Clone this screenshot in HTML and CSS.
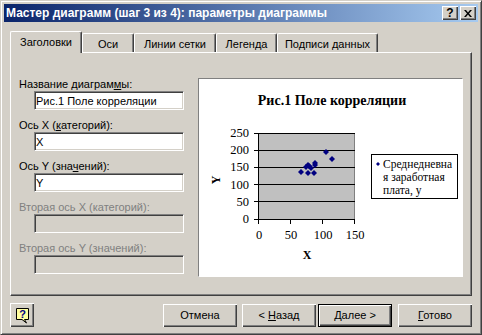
FILE: index.html
```html
<!DOCTYPE html>
<html lang="ru">
<head>
    <meta charset="UTF-8">
    <title>Мастер диаграмм</title>
    <link rel="stylesheet" href="styles.css">
</head>
<body>
    <div class="window">
        <div class="titlebar">
            <span class="title">Мастер диаграмм (шаг 3 из 4): параметры диаграммы</span>
            <div class="caption-buttons">
                <button class="caption-btn caption-help">?</button>
                <button class="caption-btn caption-close">
                    <svg width="8" height="7" viewBox="0 0 8 7">
                        <path d="M0 0h2l2 2.5 2-2.5h2l-3 3.5 3 3.5h-2l-2-2.5-2 2.5h-2l3-3.5z" fill="#000"/>
                    </svg>
                </button>
            </div>
        </div>

        <div class="dialog">
            <div class="tabs">
                <div class="tab tab-titles active">Заголовки</div>
                <div class="tab tab-axes">Оси</div>
                <div class="tab tab-grid">Линии сетки</div>
                <div class="tab tab-legend">Легенда</div>
                <div class="tab tab-labels">Подписи данных</div>
            </div>

            <div class="panel">
                <div class="fields">
                    <div class="field">
                        <label class="field-label">Название диаграм<u>м</u>ы:</label>
                        <input class="field-input" type="text" value="Рис.1 Поле корреляции">
                    </div>
                    <div class="field">
                        <label class="field-label">Ось X (<u>к</u>атегорий):</label>
                        <input class="field-input" type="text" value="X">
                    </div>
                    <div class="field">
                        <label class="field-label">Ось Y (зна<u>ч</u>ений):</label>
                        <input class="field-input" type="text" value="Y">
                    </div>
                    <div class="field disabled">
                        <label class="field-label">Вторая ось X (категорий):</label>
                        <input class="field-input" type="text" disabled>
                    </div>
                    <div class="field disabled">
                        <label class="field-label">Вторая ось Y (значений):</label>
                        <input class="field-input" type="text" disabled>
                    </div>
                </div>

                <div class="chart">
                    <svg class="chart-svg" width="263" height="197" viewBox="0 0 263 197">
                        <defs>
                            <path id="pt" d="M0 -3L3 0L0 3L-3 0Z" fill="#000080"/>
                        </defs>
                        <text class="chart-title" x="133" y="26">Рис.1 Поле корреляции</text>

                        <rect x="59.5" y="54.5" width="96" height="86" fill="#c0c0c0" stroke="#808080"/>
                        <g stroke="#000">
                            <path d="M59 54.5h97M59 71.5h97M59 88.5h97M59 105.5h97M59 122.5h97M59 140.5h97"/>
                            <path d="M59.5 54v87"/>
                            <path d="M55 54.5h4M55 71.5h4M55 88.5h4M55 105.5h4M55 122.5h4M55 140.5h4"/>
                            <path d="M59.5 141v4M91.5 141v4M123.5 141v4M155.5 141v4"/>
                        </g>

                        <g class="tick-y">
                            <text x="50" y="58">250</text>
                            <text x="50" y="75">200</text>
                            <text x="50" y="92">150</text>
                            <text x="50" y="110">100</text>
                            <text x="50" y="127">50</text>
                            <text x="50" y="144">0</text>
                        </g>
                        <g class="tick-x">
                            <text x="60" y="160">0</text>
                            <text x="92" y="160">50</text>
                            <text x="124" y="160">100</text>
                            <text x="156" y="160">150</text>
                        </g>

                        <text class="axis-title" x="108" y="180">X</text>
                        <text class="axis-title" transform="translate(21 101) rotate(-90)">Y</text>

                        <use href="#pt" x="102" y="93"/>
                        <use href="#pt" x="107" y="88"/>
                        <use href="#pt" x="109" y="86"/>
                        <use href="#pt" x="110" y="87"/>
                        <use href="#pt" x="112" y="89"/>
                        <use href="#pt" x="109" y="94"/>
                        <use href="#pt" x="115" y="94"/>
                        <use href="#pt" x="116" y="86"/>
                        <use href="#pt" x="116" y="84"/>
                        <use href="#pt" x="127" y="73"/>
                        <use href="#pt" x="133" y="80"/>

                        <rect x="172.5" y="75.5" width="86" height="44" fill="#fff" stroke="#000"/>
                        <path d="M179 83L181 85L179 87L177 85Z" fill="#000080"/>
                        <g class="legend-text">
                            <text x="184" y="89">Среднедневна</text>
                            <text x="184" y="102">я заработная</text>
                            <text x="184" y="115">плата, y</text>
                        </g>
                    </svg>
                </div>
            </div>

            <div class="footer">
                <button class="help-btn">
                    <svg width="14" height="16" viewBox="0 0 14 16">
                        <path d="M0.5 0.5h12v11h-4l2 3.5-4.5-3.5h-5.5z" fill="#ffffa0" stroke="#000"/>
                        <text x="6.5" y="9.5" class="help-mark">?</text>
                    </svg>
                </button>
                <button class="btn btn-cancel">Отмена</button>
                <button class="btn btn-back">&lt; <u>Н</u>азад</button>
                <button class="btn btn-next default"><u>Д</u>алее &gt;</button>
                <button class="btn btn-finish"><u>Г</u>отово</button>
            </div>
        </div>
    </div>
</body>
</html>
```

FILE: styles.css
```css
body {
    margin: 0;
    font-family: "Liberation Sans", Arial, sans-serif;
    font-size: 11px;
    color: #000;
    background-color: #d4d0c8;
}

.window {
    width: 482px;
    height: 335px;
    box-sizing: border-box;
    padding: 3px;
    background-color: #d4d0c8;
    border: 1px solid;
    border-color: #d4d0c8 #404040 #404040 #d4d0c8;
    box-shadow: inset 1px 1px #fff, inset -1px -1px #808080;
}

.titlebar {
    height: 18px;
    display: flex;
    align-items: center;
    padding-left: 2px;
    background: linear-gradient(to right, #0a246a, #a6caf0);
    color: #fff;
}

.title {
    font-weight: bold;
    font-size: 12px;
}

.caption-buttons {
    margin-left: auto;
    margin-right: 2px;
    display: flex;
    gap: 2px;
}

.caption-btn {
    width: 16px;
    height: 14px;
    padding: 0;
    box-sizing: border-box;
    display: flex;
    align-items: center;
    justify-content: center;
    background-color: #d4d0c8;
    border: none;
    box-shadow: inset 1px 1px #fff, inset -1px -1px #404040, inset -2px -2px #808080;
    font-family: "Liberation Sans", Arial, sans-serif;
    font-size: 12px;
    font-weight: bold;
    color: #000;
}

.caption-help {
    padding-bottom: 1px;
}

.dialog {
    padding: 9px 6px 0;
}

/* tab strip */
.tabs {
    display: flex;
    align-items: flex-end;
    height: 21px;
    position: relative;
    z-index: 1;
}

.tab {
    height: 19px;
    box-sizing: border-box;
    display: flex;
    align-items: center;
    justify-content: center;
    padding-top: 1px;
    border: 1px solid;
    border-color: #fff #404040 transparent #fff;
    border-bottom: none;
    border-radius: 2px 2px 0 0;
    box-shadow: inset -1px 0 #808080;
    background-color: #d4d0c8;
}

.tab.active {
    height: 22px;
    margin-bottom: -1px;
    padding-bottom: 2px;
}

.tab-titles { width: 72px; }
.tab-axes { width: 52px; }
.tab-grid { width: 82px; }
.tab-legend { width: 61px; }
.tab-labels { width: 101px; }

.panel {
    height: 244px;
    box-sizing: border-box;
    display: flex;
    align-items: flex-start;
    padding: 25px 8px 0;
    border: 1px solid;
    border-color: #fff #404040 #404040 #fff;
    box-shadow: inset -1px -1px #808080;
}

/* left column */
.fields {
    width: 170px;
}

.field {
    margin-bottom: 9px;
}

.field-label {
    display: block;
    height: 13px;
    line-height: 13px;
}

.field-input {
    display: block;
    margin: 0 0 0 15px;
    width: 150px;
    height: 19px;
    box-sizing: border-box;
    padding: 0 1px;
    font-family: "Liberation Sans", Arial, sans-serif;
    font-size: 11px;
    color: #000;
    background-color: #fff;
    border: 1px solid;
    border-color: #808080 #fff #fff #808080;
    box-shadow: inset 1px 1px #404040, inset -1px -1px #d4d0c8;
    outline: none;
}

.field.disabled .field-label {
    color: #808080;
}

.field.disabled .field-input {
    background-color: #d4d0c8;
}

/* chart preview */
.chart {
    margin-left: 9px;
    width: 265px;
    height: 199px;
    box-sizing: border-box;
    background-color: #fff;
    border: 1px solid;
    border-color: #808080 #fff #fff #808080;
}

.chart-svg {
    display: block;
    font-family: "Liberation Serif", "Times New Roman", serif;
}

.chart-title {
    font-size: 14px;
    font-weight: bold;
    text-anchor: middle;
}

.tick-y text {
    font-size: 12.5px;
    text-anchor: end;
}

.tick-x text {
    font-size: 12.5px;
    text-anchor: middle;
}

.axis-title {
    font-size: 12px;
    font-weight: bold;
    text-anchor: middle;
}

.legend-text text {
    font-size: 11.5px;
}

/* buttons */
.footer {
    display: flex;
    align-items: center;
    margin-top: 7px;
}

.help-btn,
.btn {
    box-sizing: border-box;
    padding: 0;
    background-color: #d4d0c8;
    border: none;
    box-shadow: inset 1px 1px #fff, inset -1px -1px #404040, inset -2px -2px #808080;
    font-family: "Liberation Sans", Arial, sans-serif;
    font-size: 11px;
    color: #000;
}

.help-btn {
    width: 24px;
    height: 24px;
    display: flex;
    align-items: center;
    justify-content: center;
    padding: 1px 0 0 1px;
}

.help-mark {
    font-family: "Liberation Sans", Arial, sans-serif;
    font-size: 11px;
    font-weight: bold;
    fill: #000080;
    text-anchor: middle;
}

.btn {
    width: 74px;
    height: 23px;
}

.btn-cancel { margin-left: auto; }
.btn-back { margin-left: 5px; }
.btn-next { margin-left: 2px; }
.btn-finish { margin-left: 6px; }

.btn.default {
    border: 1px solid #000;
}
```
